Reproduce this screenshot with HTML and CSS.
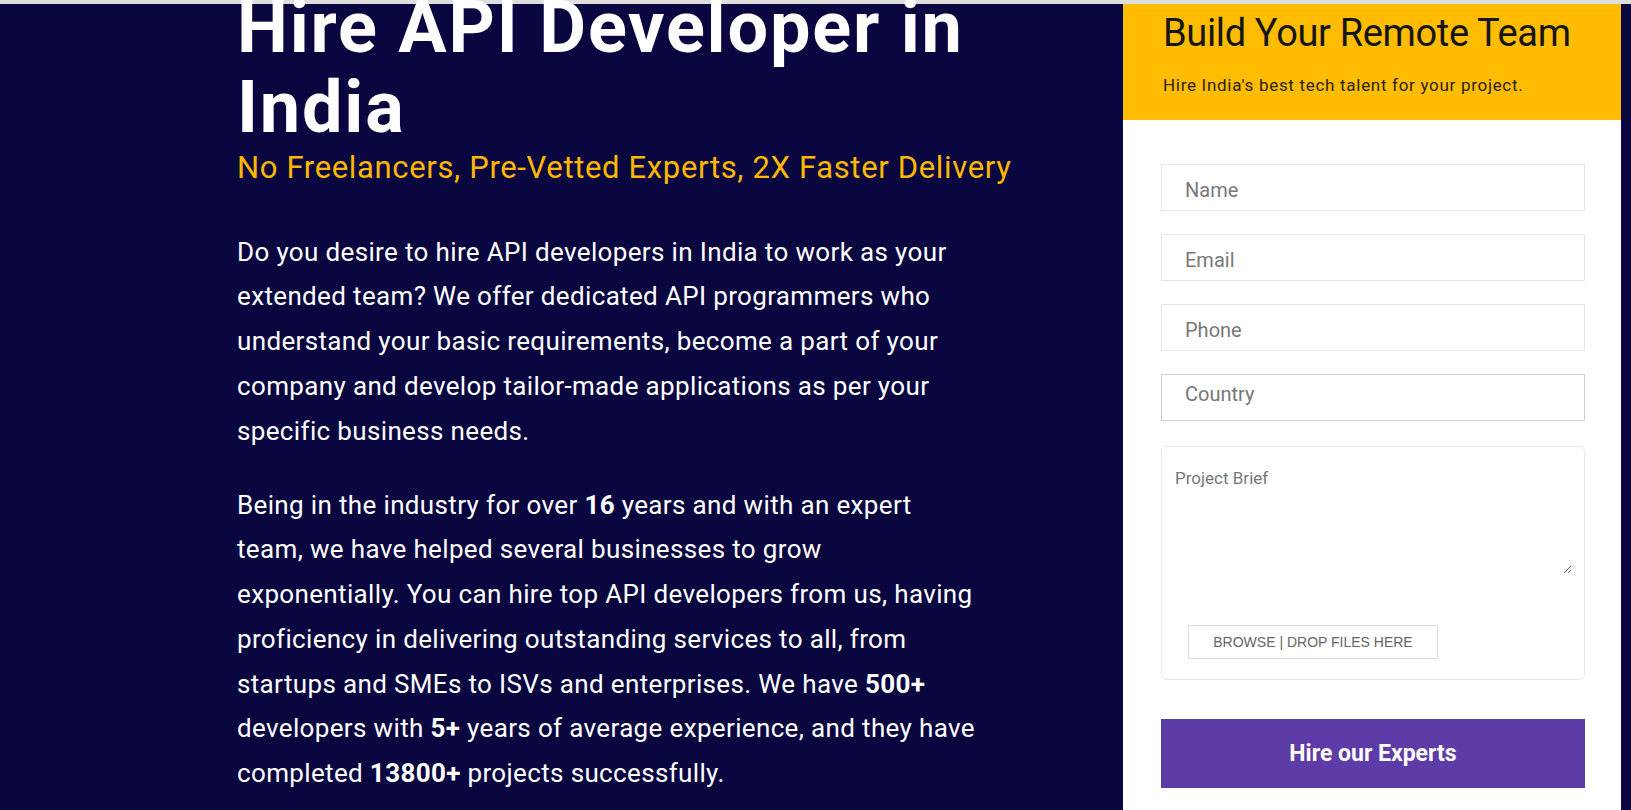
FILE: index.html
```html
<!DOCTYPE html>
<html lang="en">
<head>
<meta charset="utf-8">
<title>Hire API Developer in India</title>
<link rel="stylesheet" href="styles.css">
</head>
<body>
<div class="topbar"></div>
<section class="hero">
  <div class="intro">
    <h1 class="hero-title">Hire API Developer in<br>India</h1>
    <p class="hero-tagline">No Freelancers, Pre-Vetted Experts, 2X Faster Delivery</p>
    <p class="hero-text">Do you desire to hire API developers in India to work as your<br>extended team? We offer dedicated API programmers who<br>understand your basic requirements, become a part of your<br>company and develop tailor-made applications as per your<br>specific business needs.</p>
    <p class="hero-text">Being in the industry for over <strong>16</strong> years and with an expert<br>team, we have helped several businesses to grow<br>exponentially. You can hire top API developers from us, having<br>proficiency in delivering outstanding services to all, from<br>startups and SMEs to ISVs and enterprises. We have <strong>500+</strong><br>developers with <strong>5+</strong> years of average experience, and they have<br>completed <strong>13800+</strong> projects successfully.</p>
  </div>
  <aside class="lead-panel">
    <div class="lead-head">
      <h2 class="lead-title">Build Your Remote Team</h2>
      <p class="lead-sub">Hire India's best tech talent for your project.</p>
    </div>
    <form class="lead-form">
      <input class="field" type="text" placeholder="Name">
      <input class="field" type="email" placeholder="Email">
      <input class="field" type="tel" placeholder="Phone">
      <select class="field field-select">
        <option>Country</option>
      </select>
      <div class="brief">
        <textarea class="brief-text" placeholder="Project Brief"></textarea>
        <div class="browse">BROWSE | DROP FILES HERE</div>
      </div>
      <button class="submit" type="button">Hire our Experts</button>
    </form>
  </aside>
</section>
</body>
</html>
```
FILE: styles.css
```css
* { box-sizing: border-box; }
html, body { margin: 0; padding: 0; }
body {
  background: #0a0740;
  font-family: "Roboto", "Liberation Sans", sans-serif;
  height: 810px;
  overflow: hidden;
}
.topbar {
  height: 4px;
  background: #dedede;
}
.hero {
  display: flex;
  padding-left: 237px;
  padding-right: 10px;
  height: 806px;
}
.intro {
  flex: 1;
  color: #ffffff;
}
.hero-title {
  margin: -16px 0 0;
  font-size: 72px;
  line-height: 80px;
  font-weight: 700;
  letter-spacing: 1.8px;
  white-space: nowrap;
}
.hero-tagline {
  margin: 0;
  font-size: 31px;
  line-height: 40px;
  letter-spacing: 0.65px;
  color: #ffb800;
  white-space: nowrap;
}
.hero-text {
  margin: 41.7px 0 0;
  font-size: 26px;
  line-height: 44.7px;
  letter-spacing: 0.35px;
  white-space: nowrap;
}
.hero-text + .hero-text { margin-top: 29.5px; }
.hero-text strong { font-weight: 700; }

.lead-panel {
  width: 498px;
  background: #ffffff;
  display: flex;
  flex-direction: column;
}
.lead-head {
  background: #ffbc00;
  padding: 5px 20px 20px 40px;
  height: 116px;
}
.lead-title {
  margin: 0;
  font-size: 38px;
  line-height: 48px;
  font-weight: 400;
  letter-spacing: -0.35px;
  color: #151515;
  white-space: nowrap;
}
.lead-sub {
  margin: 16px 0 0;
  font-size: 17px;
  line-height: 24px;
  letter-spacing: 0.7px;
  color: #2a2212;
  white-space: nowrap;
}
.lead-form {
  display: flex;
  flex-direction: column;
  padding: 44px 36px 0 38px;
}
.field {
  height: 47px;
  border: 1px solid #e6e6e6;
  background: #fff;
  padding: 5px 24px 0 23px;
  font-family: "Roboto", "Liberation Sans", sans-serif;
  font-size: 20px;
  color: #777;
  margin: 0 0 23px;
  outline: none;
  border-radius: 0;
}
.field::placeholder { color: #787878; }
.field-select {
  appearance: none;
  -webkit-appearance: none;
  border-color: #cfcfcf;
  height: 47px;
  padding-top: 0;
  padding-bottom: 8px;
  margin-bottom: 25px;
}
.brief {
  border: 1px solid #e8e8e8;
  border-radius: 6px;
  height: 234px;
  padding: 9px 12px 0 1px;
}
.brief-text {
  display: block;
  width: 100%;
  height: 118px;
  border: none;
  outline: none;
  padding: 12px 12px;
  font-family: "Roboto", "Liberation Sans", sans-serif;
  font-size: 17px;
  line-height: 20px;
  color: #666;
  resize: vertical;
}
.brief-text::placeholder { color: #777; }
.browse {
  margin: 51px 0 0 25px;
  width: 250px;
  height: 34px;
  border: 1px solid #dedede;
  font-family: "Liberation Sans", Arial, sans-serif;
  font-size: 14px;
  line-height: 32px;
  color: #666;
  text-align: center;
}
.submit {
  margin-top: 39px;
  height: 69px;
  border: none;
  background: #5d3ca8;
  color: #fff;
  font-family: "Roboto", "Liberation Sans", sans-serif;
  font-size: 23px;
  font-weight: 700;
  cursor: pointer;
}
```
